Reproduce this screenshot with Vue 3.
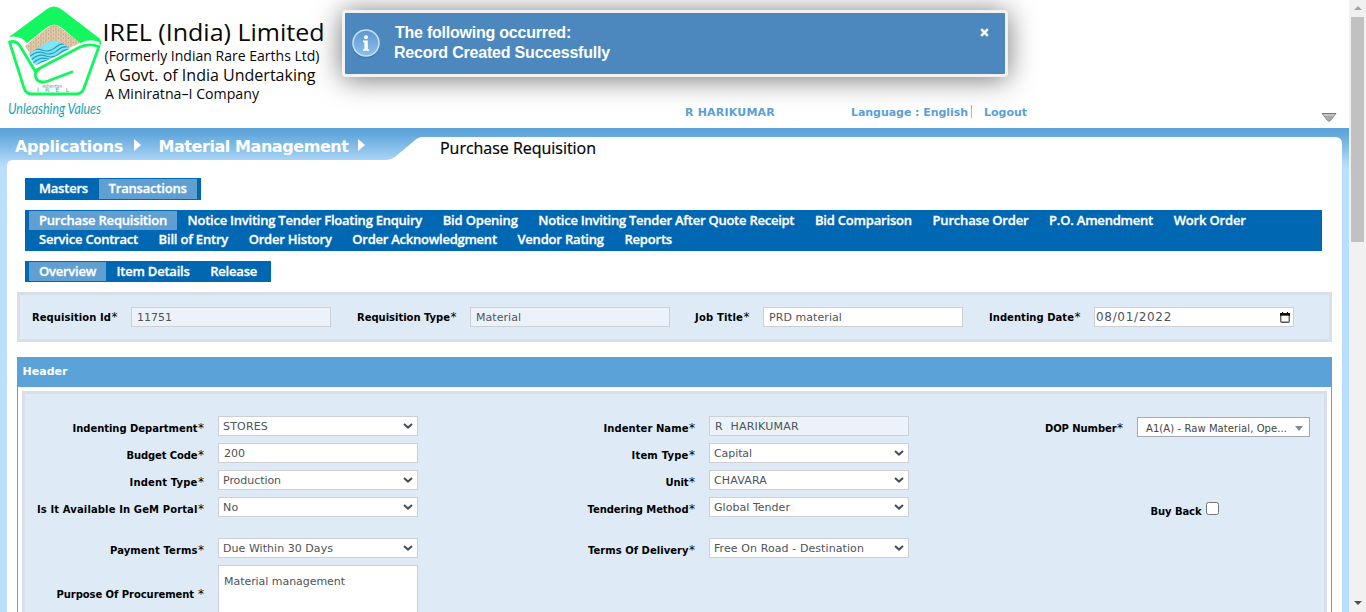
<script setup>
// Tracks a label out (or in) so that it takes up the given width.
const vFit = {
  mounted(el, { value }) {
    if (!value) return
    const natural = el.getBoundingClientRect().width
    el.style.letterSpacing = (value - natural) / el.textContent.length + 'px'
  },
}

const primary = [
  { t: 'Masters', w: 49 },
  { t: 'Transactions', w: 78, on: true },
]
const modules = [
  [
    { t: 'Purchase Requisition', w: 128, on: true },
    { t: 'Notice Inviting Tender Floating Enquiry', w: 234.5 },
    { t: 'Bid Opening', w: 75 },
    { t: 'Notice Inviting Tender After Quote Receipt', w: 256 },
    { t: 'Bid Comparison', w: 97 },
    { t: 'Purchase Order', w: 96 },
    { t: 'P.O. Amendment', w: 104 },
    { t: 'Work Order', w: 72 },
  ],
  [
    { t: 'Service Contract', w: 99 },
    { t: 'Bill of Entry', w: 69.5 },
    { t: 'Order History', w: 83 },
    { t: 'Order Acknowledgment', w: 144.5 },
    { t: 'Vendor Rating', w: 86.5 },
    { t: 'Reports', w: 47.5 },
  ],
]
const tabs = [
  { t: 'Overview', w: 57, on: true },
  { t: 'Item Details', w: 73 },
  { t: 'Release', w: 47 },
]

const summary = [
  { label: 'Requisition Id', lw: 79, value: '11751', vw: 35, kind: 'readonly' },
  { label: 'Requisition Type', lw: 93, value: 'Material', vw: 45, kind: 'readonly' },
  { label: 'Job Title', lw: 48, value: 'PRD material', vw: 73, kind: 'text' },
  { label: 'Indenting Date', lw: 85, value: '08/01/2022', vw: 76, kind: 'date' },
]

const left = [
  { label: 'Indenting Department', lw: 125, value: 'STORES', vw: 45, kind: 'select' },
  { label: 'Budget Code', lw: 71, value: '200', vw: 21, kind: 'text' },
  { label: 'Indent Type', lw: 68, value: 'Production', vw: 58, kind: 'select' },
  { label: 'Is It Available In GeM Portal', lw: 160.5, value: 'No', vw: 15.5, kind: 'select' },
  { label: 'Payment Terms', lw: 87.5, value: 'Due Within 30 Days', vw: 110, kind: 'select', gap: true },
  { label: 'Purpose Of Procurement ', lw: 141, value: 'Material management', vw: 121, kind: 'area' },
]
const middle = [
  { label: 'Indenter Name', lw: 85, value: 'R\u00a0 HARIKUMAR', vw: 84, kind: 'readonly' },
  { label: 'Item Type', lw: 57, value: 'Capital', vw: 38, kind: 'select' },
  { label: 'Unit', lw: 23, value: 'CHAVARA', vw: 53, kind: 'select' },
  { label: 'Tendering Method', lw: 101, value: 'Global Tender', vw: 76, kind: 'select' },
  { label: 'Terms Of Delivery', lw: 100.5, value: 'Free On Road - Destination', vw: 150, kind: 'select', gap: true },
]
</script>

<template>
  <div class="screen">
    <main class="page">
      <header class="top">
        <svg class="logo" width="330" height="124" viewBox="0 0 330 124">
          <defs>
            <pattern id="sand" width="5" height="4" patternUnits="userSpaceOnUse">
              <rect width="5" height="4" fill="#e3c9a8" />
              <path d="M1 0v1.6M3.4 1.6v1.6M.2 3h1.4" stroke="#a9987f" stroke-width=".8" />
            </pattern>
            <clipPath id="wave"><path d="M34 64L29 54L46 43Q54 38 62 43L72 50L36 65Z" /></clipPath>
          </defs>
          <path d="M9 37L47 9Q54 4 61 9L99 38Q102 41 101 45Q90 39 81 44L62 28Q54 21 46 28L27 43Q20 35 9 37Z" fill="#13f65f" />
          <path d="M25 46L47 28Q54 22 61 28L80 43L37 63L32 57Z" fill="url(#sand)" />
          <g clip-path="url(#wave)">
            <rect x="28" y="38" width="50" height="30" fill="#7fe4f4" />
            <path d="M27 54Q35 47 42 50T56 47T74 46M29 57Q37 50 44 53T58 50T75 49M31 60Q39 53 46 56T60 53T76 52M33 63Q41 56 48 59T62 56M36 66Q43 59 50 61" fill="none" stroke="#239fbd" stroke-width="1.2" />
          </g>
          <path d="M9.5 42Q17 38 21 47L35 71L80 47Q89 43 99 46.500L84 88Q82 94 76 94H32Q26 94 24 88Z" fill="#fff" />
          <path d="M37 69L81 45Q89 40 99 44" fill="none" stroke="#fff" stroke-width="4" />
          <path d="M42 67L35 71L20 46Q16 40 9.500 42L24 88Q26 94 32 94H76Q82 94 84 88L99 46.500Q89 43 80 47L42 67Q33 72 36 78Q39 84 48 81L73 71.500" fill="none" stroke="#13f65f" stroke-width="2.800" stroke-linejoin="round" />
          <text class="hindi" x="42" y="87.500" textLength="20" lengthAdjust="spacingAndGlyphs">आईआरईएल</text>
          <text class="mark" x="37" y="92" textLength="32">IREL</text>
          <text class="motto" x="8" y="114" textLength="93" lengthAdjust="spacingAndGlyphs">Unleashing Values</text>
          <g class="name">
            <text x="102.500" y="41" font-size="24" textLength="222" lengthAdjust="spacingAndGlyphs">IREL (India) Limited</text>
            <text x="104.500" y="61" font-size="14.500" textLength="215" lengthAdjust="spacingAndGlyphs">(Formerly Indian Rare Earths Ltd)</text>
            <text x="105" y="81" font-size="16" textLength="210.500" lengthAdjust="spacingAndGlyphs">A Govt. of India Undertaking</text>
            <text x="105" y="99" font-size="14" textLength="154" lengthAdjust="spacingAndGlyphs">A Miniratna–I Company</text>
          </g>
        </svg>
        <nav class="user">
          <span class="who"><span v-fit="90">R HARIKUMAR</span></span>
          <span class="lang"><span v-fit="117">Language : English</span></span>
          <span v-fit="43">Logout</span>
        </nav>
        <svg class="collapse" width="16" height="12" viewBox="0 0 16 12">
          <path d="M1 1.500H15L9.500 8.500Q8 10 6.500 8.500Z" fill="#aaa" stroke="#8a8a8a" />
          <path d="M1 1.500H15" stroke="#777" /><path d="M2.500 3H13.500" stroke="#ddd" />
        </svg>
      </header>

      <section class="frame">
        <svg class="crest" width="1349" height="484" viewBox="0 0 1349 484">
          <defs>
            <linearGradient id="sky" x1="0" y1="0" x2="0" y2="40" gradientUnits="userSpaceOnUse">
              <stop offset="0" stop-color="#5ba2d8" /><stop offset=".2" stop-color="#67abde" />
              <stop offset=".85" stop-color="#aed7f7" /><stop offset="1" stop-color="#b9dffd" />
            </linearGradient>
          </defs>
          <rect width="1349" height="484" fill="url(#sky)" />
          <path d="M7 484V38Q7 32 13 32H386Q391 32 395 29L414 13Q418 9 423 9H1335Q1342 9 1342 16V484Z" fill="#fff" />
        </svg>
        <div class="content">
          <div class="crumbs">
            <span class="crumb c1"><span v-fit="108">Applications</span><i class="tri"></i></span>
            <span class="crumb c2"><span v-fit="190">Material Management</span><i class="tri t2"></i></span>
            <h1 class="title"><span v-fit="156">Purchase Requisition</span></h1>
          </div>

          <div class="menu m1">
            <div class="mrow">
              <a v-for="m in primary" :key="m.t" :class="{ on: m.on }"><span v-fit="m.w">{{ m.t }}</span></a>
            </div>
          </div>
          <div class="menu m2">
            <div v-for="(row, i) in modules" :key="i" class="mrow">
              <a v-for="m in row" :key="m.t" :class="{ on: m.on }"><span v-fit="m.w">{{ m.t }}</span></a>
            </div>
          </div>
          <div class="menu m3">
            <div class="mrow">
              <a v-for="m in tabs" :key="m.t" :class="{ on: m.on }"><span v-fit="m.w">{{ m.t }}</span></a>
            </div>
          </div>

          <div class="panel summary">
            <div v-for="f in summary" :key="f.label" class="cell">
              <label><span v-fit="f.lw">{{ f.label }}</span><span class="star">*</span></label>
              <div class="field" :class="f.kind">
                <span v-fit="f.vw">{{ f.value }}</span>
                <svg v-if="f.kind === 'date'" class="cal" width="10" height="11" viewBox="0 0 10 11">
                  <rect x=".75" y="1.750" width="8.500" height="8.500" rx="1" fill="none" stroke="#555" stroke-width="1.300" />
                  <path d="M0 1H10V3.700H0Z" fill="#111" /><path d="M2.500 0V2M7.500 0V2" stroke="#111" />
                </svg>
              </div>
            </div>
          </div>

          <div class="group">
            <h2><span v-fit="45">Header</span></h2>
            <div class="panel form">
              <div v-for="(col, c) in [left, middle]" :key="c" class="col" :class="'col' + c">
                <div v-for="f in col" :key="f.label" class="row" :class="{ gap: f.gap, tall: f.kind === 'area' }">
                  <label><span class="pre" v-fit="f.lw">{{ f.label }}</span><span class="star">*</span></label>
                  <div class="field" :class="f.kind">
                    <span v-fit="f.vw">{{ f.value }}</span>
                    <svg v-if="f.kind === 'select'" class="chev" width="10" height="6" viewBox="0 0 10 6">
                      <path d="M1 1L5 4.600L9 1" fill="none" stroke="#4a4e54" stroke-width="2" />
                    </svg>
                  </div>
                </div>
              </div>
              <div class="col col2">
                <div class="row dop">
                  <label><span v-fit="71.500">DOP Number</span><span class="star">*</span></label>
                  <div class="combo"><span v-fit="141">A1(A) - Raw Material, Ope...</span><i></i></div>
                </div>
                <div class="buy"><label><span v-fit="51">Buy Back</span></label><span class="check"></span></div>
              </div>
            </div>
          </div>
        </div>
      </section>

      <div class="toast">
        <svg class="info" width="30" height="32" viewBox="0 0 30 32">
          <defs>
            <linearGradient id="orb" x1="0" y1="0" x2="0" y2="1">
              <stop offset="0" stop-color="#5c98d0" /><stop offset="1" stop-color="#8fbfe8" />
            </linearGradient>
          </defs>
          <circle cx="15" cy="16.500" r="14" fill="#3b6fa5" opacity=".6" />
          <circle cx="15" cy="15" r="13" fill="url(#orb)" stroke="#c5e2f8" stroke-width="1.600" />
          <circle cx="15" cy="9.200" r="2" fill="#fff" />
          <path d="M12 12.600H16.800V21.200H18.200V22.800H12V21.200H13.400V14.200H12Z" fill="#fff" />
        </svg>
        <p><span class="lead" v-fit="176">The following occurred:</span><br /><span v-fit="216">Record Created Successfully</span></p>
        <svg class="close" width="9" height="9" viewBox="0 0 9 9"><path d="M1.200 1.200L7.800 7.800M7.800 1.200L1.200 7.800" stroke="#fff" stroke-width="2.600" /></svg>
      </div>
    </main>

    <aside class="bar">
      <i class="up"></i><div class="thumb"></div><i class="down"></i>
    </aside>
  </div>
</template>

<style>
html, body { margin: 0; background: #fff; overflow: hidden; }
</style>

<style scoped>
* { box-sizing: border-box; }
.screen { display: flex; width: 1366px; height: 612px; overflow: hidden; font-family: Verdana, "DejaVu Sans", sans-serif; font-size: 11px; }
.page { position: relative; width: 1349px; height: 612px; overflow: hidden; }
.top { display: flex; height: 128px; }
.logo { flex: none; display: block; }
.name { font-family: "Open Sans", "Noto Sans", sans-serif; fill: #080808; }
.hindi { font-family: "Noto Sans", sans-serif; font-size: 4px; fill: #999; }
.mark { font-family: "DejaVu Sans", sans-serif; font-size: 6px; fill: #1fa9cb; }
.motto { font-family: Lato, sans-serif; font-style: italic; font-size: 16px; fill: #1ba2b4; }
.user { display: flex; margin-left: 355px; padding-top: 106px; width: 636px; color: #5ba0d8; font-weight: bold; line-height: 14px; height: 120px; white-space: nowrap; }
.who { width: 166px; }
.lang { width: 121px; border-right: 1px solid #b5b5b5; margin-right: 12px; height: 13px; margin-top: -1px; padding-top: 1px; }
.collapse { margin-top: 112px; }

.frame { position: relative; height: 484px; }
.crest { position: absolute; left: 0; top: 0; }
.content { position: relative; padding: 0 17px; }
.crumbs { display: flex; height: 50px; margin-left: -2px; color: #fff; font-size: 16px; font-weight: bold; white-space: nowrap; }
.crumb { display: flex; line-height: 20px; padding-top: 9px; }
.c1 { width: 143.5px; }
.c2 { width: 281.500px; }
.tri { width: 0; height: 0; margin: 2px 0 0 11px; border: solid transparent; border-width: 6px 0 6px 7px; border-left-color: #fff; }
.t2 { margin-left: 9.500px; }
.title { margin: 0; padding-top: 9px; color: #000; font: 400 16px/22px "Open Sans", "Noto Sans", sans-serif; -webkit-text-stroke: .2px #000; }

.menu { background: #0067b3; margin-left: 8px; padding: 1px 0 1px 4px; color: #fff; font: 600 13px/19px "Open Sans", "Noto Sans", sans-serif; }
.mrow { display: flex; height: 19px; white-space: nowrap; }
.mrow a { padding: 0 10px; margin-right: .6px; -webkit-text-stroke: .3px #fff; }
.mrow .on { background: #5f9fd1; }
.m1 { width: 176px; height: 22px; }
.m1 .mrow { height: 20px; line-height: 19px; }
.m2 { width: 1297px; height: 41px; margin-top: 10px; }
.m3 { width: 246px; height: 21px; margin-top: 10px; }

.panel { border: 3px solid #d8dfe8; background: #deeaf6; }
label { font-weight: bold; color: #000; white-space: nowrap; line-height: 14px; font-size: 10px; text-align: right; }
label span { display: inline-block; }
.pre { white-space: pre; }
.star { font-weight: normal; width: 7px; font-size: 12px; line-height: 12px; text-align: center; }
.field { display: flex; flex: none; width: 200px; height: 20px; border: 1px solid #ccd0d5; background: #fff; color: #4e5359; padding: 0 5px; line-height: 19px; font-size: 11px; white-space: nowrap; }
.field.readonly { background: #ebf2f9; }
.select { padding-left: 4px; justify-content: space-between; }
.chev { margin: 6px -1px 0 0; }
.date { padding: 0 3px 0 1px; font-size: 12px; line-height: 18px; justify-content: space-between; }
.cal { margin-top: 4px; }
.field.area { height: 60px; padding-top: 6px; }

.summary { height: 50px; margin-top: 10px; padding-top: 12px; display: flex; }
.summary .date { line-height: 18px; }
.cell { display: flex; }
.cell label { padding-top: 4px; width: 98px; margin-right: 13px; }
.cell:nth-child(2) label { width: 126px; }
.cell:nth-child(3) label { width: 80px; }
.cell:nth-child(4) label { width: 118px; }

.group { margin-top: 15px; border: solid #5ba2d8; border-width: 0 1px; height: 260px; background: #fff; }
.group h2 { margin: 0 -1px; height: 30px; padding: 8px 0 0 5.500px; background: #5ba2d8; color: #fff; font-size: 11px; line-height: 14px; }
.form { display: flex; height: 240px; margin: 4px 4px 0; padding-top: 22px; }
.row { display: flex; height: 20px; margin-bottom: 7px; }
.row label { flex: 1; padding-top: 6px; margin-right: 13.500px; }
.gap { margin-top: 21px; }
.tall { height: 60px; }
.tall label { padding-top: 23px; }
.col0 { width: 393px; }
.col1 { width: 491px; }
.col2 { width: 401px; }
.dop { padding-top: 1px; height: 21px; }
.dop label { padding-top: 5px; }
.combo { display: flex; justify-content: space-between; width: 173px; height: 20px; border: 1px solid #a8a8a8; background: #fff; color: #444; font-size: 10px; line-height: 21px; padding: 0 6px 0 8px; white-space: nowrap; }
.combo i { margin-top: 8px; width: 0; height: 0; border: solid transparent; border-width: 5px 4px 0; border-top-color: #888; }
.buy { display: flex; justify-content: flex-end; margin-top: 65px; padding-right: 91px; }
.buy label { padding-top: 3px; margin-right: 4.500px; }
.check { width: 13px; height: 13px; border: 1px solid #767676; border-radius: 2.500px; background: #fff; }

.toast { position: absolute; left: 342px; top: 10px; width: 666px; height: 67px; display: flex; border: 3px solid #f2f2f2; border-radius: 4px; background: #4c88be; box-shadow: 0 2px 28px rgba(0, 0, 0, .55); color: #fff; font: bold 16px/20px "Liberation Sans", Arial, sans-serif; padding: 10px 16px 0 6px; white-space: nowrap; }
.info { margin-top: 5px; }
.toast p { margin: 0 0 0 13px; flex: 1; }
.lead { margin-left: 1px; }
.close { margin-top: 4.500px; }

.bar { width: 17px; height: 612px; background: #f1f1f1; display: flex; flex-direction: column; align-items: center; }
.thumb { width: 13px; height: 225px; background: #c1c1c1; margin-top: 7px; }
.up, .down { width: 0; height: 0; border: solid transparent; }
.up { margin-top: 6px; border-width: 0 4px 4px; border-bottom-color: #a3a3a3; }
.down { margin: auto 0 7px; border-width: 4px 4px 0; border-top-color: #505050; }
</style>
